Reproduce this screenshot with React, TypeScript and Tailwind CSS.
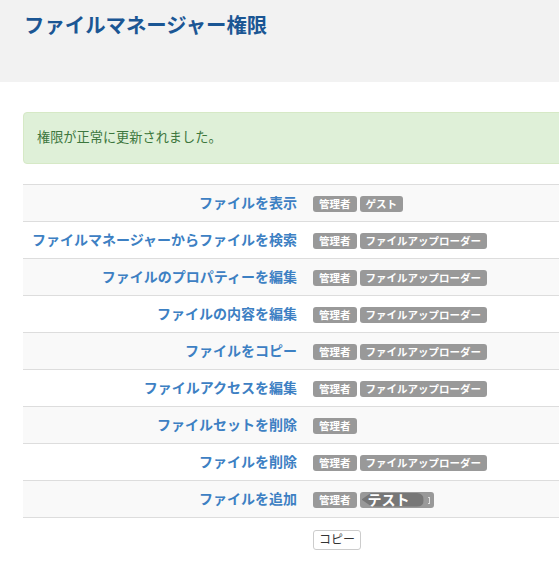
import React from "react";

type Row = { label: string; roles: string[]; dragging?: boolean };

const rows: Row[] = [
  { label: "ファイルを表示", roles: ["管理者", "ゲスト"] },
  { label: "ファイルマネージャーからファイルを検索", roles: ["管理者", "ファイルアップローダー"] },
  { label: "ファイルのプロパティーを編集", roles: ["管理者", "ファイルアップローダー"] },
  { label: "ファイルの内容を編集", roles: ["管理者", "ファイルアップローダー"] },
  { label: "ファイルをコピー", roles: ["管理者", "ファイルアップローダー"] },
  { label: "ファイルアクセスを編集", roles: ["管理者", "ファイルアップローダー"] },
  { label: "ファイルセットを削除", roles: ["管理者"] },
  { label: "ファイルを削除", roles: ["管理者", "ファイルアップローダー"] },
  { label: "ファイルを追加", roles: ["管理者"], dragging: true },
];

const font = {
  fontFamily: '"Liberation Sans", "Noto Sans CJK JP", sans-serif',
};

function Badge({ children }: { children: React.ReactNode }) {
  return (
    <span className="inline-block rounded-[3px] bg-[#999999] px-[6px] pt-[3px] pb-[3px] text-[10.5px] font-bold leading-[10.5px] text-white">
      {children}
    </span>
  );
}

function DraggingBadge() {
  return (
    <span className="relative inline-flex h-[16.5px] w-[74px] items-center rounded-[3px] bg-[#999999]">
      <span className="absolute left-[2px] top-[1px] h-[14px] w-[62px] rounded-r-[7px] bg-[#777777] [clip-path:polygon(0_50%,10px_0,100%_0,100%_100%,10px_100%)]" />
      <span className="relative ml-[8px] text-[14px] font-bold leading-[14px] text-white">テスト</span>
      <span className="absolute right-[4px] top-[5px] h-[7px] w-[2px] border-y border-r border-[#dddddd]" />
    </span>
  );
}

export default function App() {
  return (
    <div className="min-h-[576px] w-full overflow-hidden bg-white" style={font}>
      <div className="h-[82px] bg-[#f2f2f2] pl-[24px] pt-[14px]">
        <h1 className="text-[20.4px] font-bold leading-[24px] text-[#1b5694]">ファイルマネージャー権限</h1>
      </div>

      <div className="w-[640px] pl-[23px] pt-[30px]">
        <div className="rounded-[4px] border border-[#d6e9c6] bg-[#dff0d8] px-[13px] py-[15px] text-[13.2px] leading-[20px] text-[#3c763d]">
          権限が正常に更新されました。
        </div>

        <table className="mt-[20px] w-full border-collapse">
          <tbody>
            {rows.map((r, i) => (
              <tr key={r.label} className={i % 2 === 0 ? "bg-[#f9f9f9]" : "bg-white"}>
                <td className="w-[282px] whitespace-nowrap border-t border-[#dddddd] p-[8px] text-right text-[14px] font-bold leading-[20px] text-[#3d80c3]">
                  {r.label}
                </td>
                <td className="border-t border-[#dddddd] p-[8px] leading-[20px]">
                  <span className="inline-flex items-center gap-[3px] align-middle">
                    {r.roles.map((role) => (
                      <Badge key={role}>{role}</Badge>
                    ))}
                    {r.dragging && <DraggingBadge />}
                  </span>
                </td>
              </tr>
            ))}
            <tr>
              <td className="border-t border-[#dddddd] p-[8px]" />
              <td className="border-t border-[#dddddd] px-[8px] pt-[9px] pb-[8px]">
                <button className="rounded-[3px] border border-[#cccccc] bg-white px-[5px] text-[12px] leading-[18px] text-[#333333]">
                  コピー
                </button>
              </td>
            </tr>
          </tbody>
        </table>
      </div>
    </div>
  );
}
